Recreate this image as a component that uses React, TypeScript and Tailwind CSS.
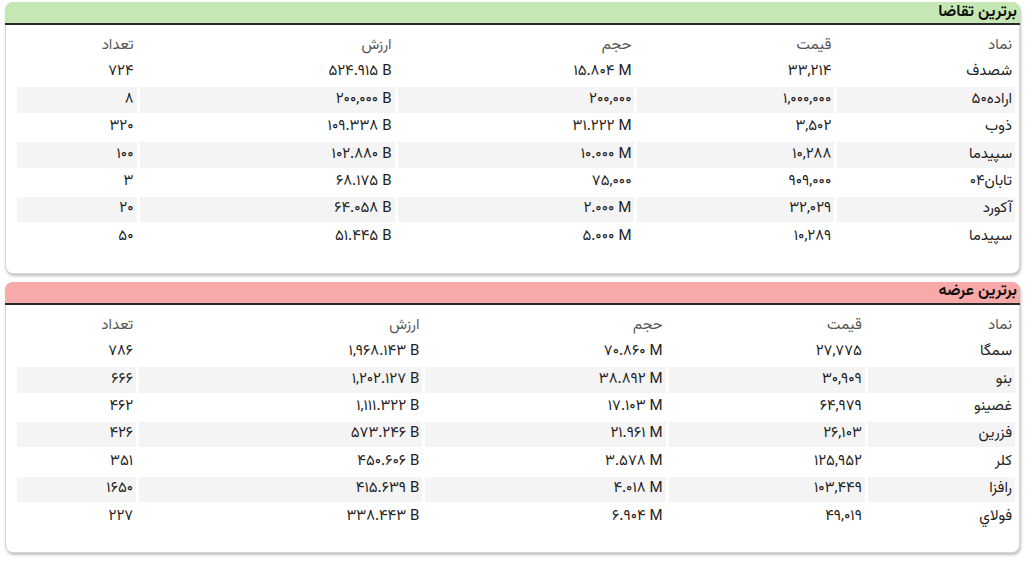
import React from "react";

type Row = [string, string, string, string, string];

const demand: Row[] = [
  ["شصدف", "۳۳,۲۱۴", "۱۵.۸۰۴ M", "۵۲۴.۹۱۵ B", "۷۲۴"],
  ["اراده۵۰", "۱,۰۰۰,۰۰۰", "۲۰۰,۰۰۰", "۲۰۰,۰۰۰ B", "۸"],
  ["ذوب", "۳,۵۰۲", "۳۱.۲۲۲ M", "۱۰۹.۳۳۸ B", "۳۲۰"],
  ["سپیدما", "۱۰,۲۸۸", "۱۰.۰۰۰ M", "۱۰۲.۸۸۰ B", "۱۰۰"],
  ["تابان۰۴", "۹۰۹,۰۰۰", "۷۵,۰۰۰", "۶۸.۱۷۵ B", "۳"],
  ["آکورد", "۳۲,۰۲۹", "۲.۰۰۰ M", "۶۴.۰۵۸ B", "۲۰"],
  ["سپیدما", "۱۰,۲۸۹", "۵.۰۰۰ M", "۵۱.۴۴۵ B", "۵۰"],
];

const supply: Row[] = [
  ["سمگا", "۲۷,۷۷۵", "۷۰.۸۶۰ M", "۱,۹۶۸.۱۴۳ B", "۷۸۶"],
  ["بنو", "۳۰,۹۰۹", "۳۸.۸۹۲ M", "۱,۲۰۲.۱۲۷ B", "۶۶۶"],
  ["غصینو", "۶۴,۹۷۹", "۱۷.۱۰۳ M", "۱,۱۱۱.۳۲۲ B", "۴۶۲"],
  ["فزرین", "۲۶,۱۰۳", "۲۱.۹۶۱ M", "۵۷۳.۲۴۶ B", "۴۲۶"],
  ["کلر", "۱۲۵,۹۵۲", "۳.۵۷۸ M", "۴۵۰.۶۰۶ B", "۳۵۱"],
  ["رافزا", "۱۰۳,۴۴۹", "۴.۰۱۸ M", "۴۱۵.۶۳۹ B", "۱۶۵۰"],
  ["فولاي", "۴۹,۰۱۹", "۶.۹۰۴ M", "۳۳۸.۴۴۳ B", "۲۲۷"],
];

const heads = ["نماد", "قیمت", "حجم", "ارزش", "تعداد"];

function Card({
  title,
  headerBg,
  rows,
  widths,
}: {
  title: string;
  headerBg: string;
  rows: Row[];
  widths: number[];
}) {
  return (
    <div className="rounded-[8px] border border-[#d6d6d6] bg-white shadow-[1px_2px_3px_rgba(0,0,0,0.25)]">
      <div
        className={`${headerBg} h-[23px] -mx-[1px] -mt-[1px] rounded-t-[8px] border-b-2 border-[#2a2a2a] flex items-center justify-start pr-[3px]`}
      >
        <span className="text-[16px] font-bold text-[#111] leading-none">{title}</span>
      </div>
      <div className="pr-[1px] pl-[8px] pt-[6px] pb-[21px]">
        <table className="w-full border-separate border-spacing-x-[3px] border-spacing-y-[2px] table-fixed">
          <colgroup>
            {widths.map((w, i) => (
              <col key={i} style={{ width: w }} />
            ))}
          </colgroup>
          <thead>
            <tr className="h-[25px]">
              {heads.map((h) => (
                <th key={h} className="text-right font-normal text-[15px] text-[#555] px-[3px] pt-[2px]">
                  {h}
                </th>
              ))}
            </tr>
          </thead>
          <tbody>
            {rows.map((r, i) => (
              <tr key={i} className="h-[25.4px]">
                {r.map((c, j) => (
                  <td
                    key={j}
                    className={`text-right text-[15px] text-[#222] px-[3px] ${i % 2 === 1 ? "bg-[#f4f4f4]" : ""}`}
                  >
                    {j === 0 ? c : <span dir="ltr">{c}</span>}
                  </td>
                ))}
              </tr>
            ))}
          </tbody>
        </table>
      </div>
    </div>
  );
}

export default function App() {
  return (
    <div
      dir="rtl"
      className="bg-white w-[1027px] h-[565px] pl-[5px] pr-[7px] pt-[2px] flex flex-col gap-[8px]"
      style={{ fontFamily: "'Vazirmatn', 'DejaVu Sans', sans-serif" }}
    >
      <Card title="برترین تقاضا" headerBg="bg-[#c5e7b4]" rows={demand} widths={[177, 196, 236, 254, 119]} />
      <Card title="برترین عرضه" headerBg="bg-[#f8aaaa]" rows={supply} widths={[147, 196, 240, 283, 119]} />
    </div>
  );
}
